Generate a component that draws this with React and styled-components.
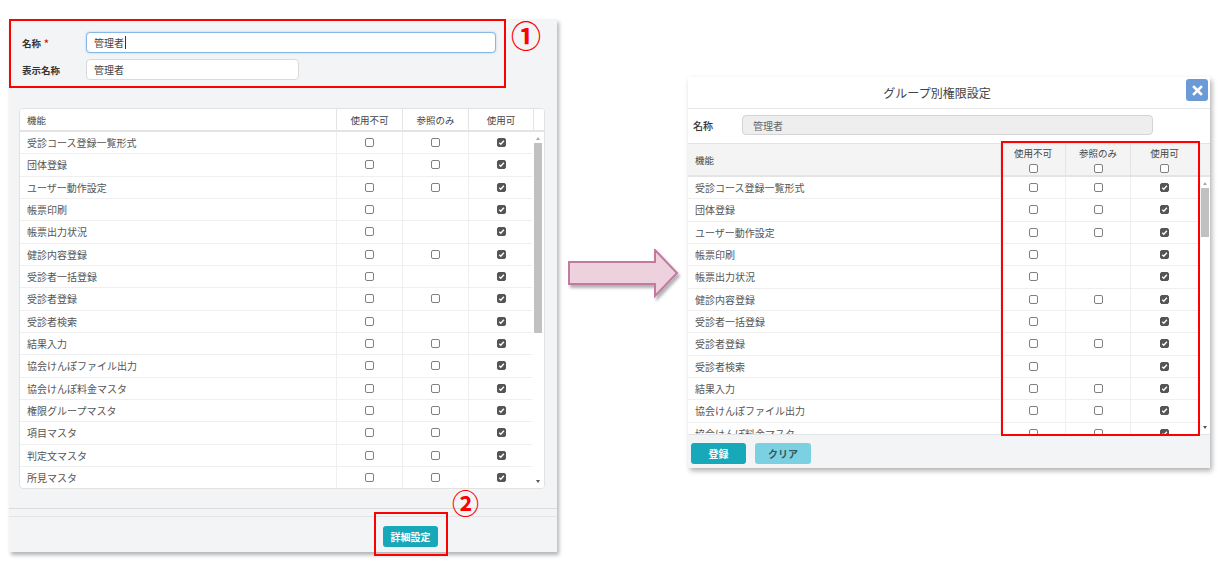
import React from 'react';
import styled, { createGlobalStyle } from 'styled-components';

const Global = createGlobalStyle`
  html, body { margin: 0; padding: 0; background: #fff; }
  body { font-family: "Noto Sans CJK JP", "Noto Sans", sans-serif; color: #555; }
  * { box-sizing: border-box; }
`;

const Page = styled.div`
  width: 1221px;
  height: 565px;
  overflow: hidden;
  display: flex;
  align-items: flex-start;
  padding-left: 9px;
`;

/* ---------- left panel ---------- */
const LeftPanel = styled.section`
  flex-shrink: 0;
  margin-top: 19px;
  width: 548px;
  height: 533px;
  background: #f3f4f6;
  box-shadow: 2px 3px 4px rgba(0, 0, 0, 0.3);
  display: flex;
  flex-direction: column;
`;

const FormRow = styled.div`
  display: flex;
  align-items: flex-start;
`;

const FormBox = styled.div`
  width: 497px;
  height: 69px;
  border: 2px solid #f00;
  padding: 11px 8px 0 11px;
  display: grid;
  grid-template-columns: 64px 1fr;
  row-gap: 6px;
  align-items: center;
  align-content: start;
`;

const Label = styled.div`
  font-size: 9.5px;
  font-weight: 700;
  color: #333;
`;

const Req = styled.span`
  color: #e02020;
  margin-left: 3px;
`;

const Field = styled.div`
  width: ${(p) => p.$w}px;
  height: 21px;
  border: 1px solid ${(p) => (p.$focus ? '#86b7e6' : '#d9d9d9')};
  box-shadow: ${(p) => (p.$focus ? '0 0 2px rgba(102,160,220,0.5)' : 'none')};
  border-radius: 4px;
  background: #fff;
  font-size: 10px;
  color: #444;
  padding-left: 7px;
  display: flex;
  align-items: center;
`;

const Caret = styled.span`
  display: inline-block;
  width: 1px;
  height: 13px;
  background: #333;
  margin-left: 1px;
`;

const Badge = styled.div`
  color: #f00;
  font-size: ${(p) => p.$size}px;
  font-weight: 700;
  line-height: 1;
  margin-left: 5px;
`;

const TableCard = styled.div`
  margin: 20px 12px 0 10px;
  height: 381px;
  background: #fff;
  border: 1px solid #e2e2e2;
  border-radius: 4px;
  overflow: hidden;
  display: flex;
  flex-direction: column;
`;

const HeadRow = styled.div`
  flex-shrink: 0;
  display: grid;
  grid-template-columns: ${(p) => p.$cols} 1fr;
  height: ${(p) => p.$h}px;
  background: ${(p) => p.$bg};
  border-bottom: 2px solid #e4e4e4;
`;

const HeadCell = styled.div`
  border-right: 1px solid #e4e4e4;
  display: flex;
  flex-direction: column;
  align-items: ${(p) => (p.$left ? 'flex-start' : 'center')};
  justify-content: center;
  gap: 5px;
  padding-left: ${(p) => (p.$left ? 7 : 0)}px;
  font-size: 9.5px;
  color: #444;
  line-height: 12px;
`;

const Body = styled.div`
  flex: 1;
  min-height: 0;
  display: flex;
`;

const RowList = styled.div`
  flex: 1;
  overflow: hidden;
`;

const Row = styled.div`
  display: grid;
  grid-template-columns: ${(p) => p.$cols};
  height: 22.33px;
  border-bottom: 1px solid #efefef;
`;

const Cell = styled.div`
  border-right: 1px solid #efefef;
  display: flex;
  align-items: center;
  justify-content: ${(p) => (p.$left ? 'flex-start' : 'center')};
  padding-left: ${(p) => (p.$left ? 7 : 0)}px;
  font-size: 10px;
  color: #555;
  white-space: nowrap;
`;

const Scroll = styled.div`
  width: ${(p) => p.$w}px;
  flex-shrink: 0;
  background: #fff;
  display: flex;
  flex-direction: column;
  align-items: center;
`;

const UpArrow = styled.div`
  width: 0;
  height: 0;
  border-left: 2.5px solid transparent;
  border-right: 2.5px solid transparent;
  border-bottom: 3px solid #aaa;
  margin: 5px 0 3px;
`;

const Thumb = styled.div`
  width: 8px;
  height: ${(p) => p.$h}px;
  background: #c1c1c1;
`;

const Grow = styled.div`
  flex: 1;
`;

const DownArrow = styled.div`
  width: 0;
  height: 0;
  border-left: 2.5px solid transparent;
  border-right: 2.5px solid transparent;
  border-top: 3px solid #555;
  margin-bottom: 5px;
`;

const Sep = styled.div`
  margin-top: 19px;
  height: 9px;
  border-top: 1px solid #dcdcdc;
  border-bottom: 1px solid #e4e4e4;
`;

const LeftFooter = styled.div`
  flex: 1;
  display: flex;
  align-items: flex-start;
  padding: 5px 0 0 374px;
`;

const Annot = styled.div`
  position: relative;
`;

const RedFrame = styled.div`
  position: absolute;
  pointer-events: none;
  border: 2px solid #f00;
  left: ${(p) => p.$l}px;
  top: ${(p) => p.$t}px;
  width: ${(p) => p.$w}px;
  height: ${(p) => p.$h}px;
`;

const FloatNum = styled.div`
  position: absolute;
  left: 69px;
  top: -33px;
  color: #f00;
  font-size: 27px;
  font-weight: 700;
  line-height: 1;
`;

const Btn = styled.button`
  width: ${(p) => p.$w}px;
  height: 21px;
  border: none;
  border-radius: 3px;
  padding: 0;
  background: ${(p) => (p.$light ? '#7bd0e1' : '#17a8b9')};
  color: ${(p) => (p.$light ? '#2f5a63' : '#fff')};
  font-family: inherit;
  font-size: 10px;
  font-weight: 700;
`;

/* ---------- arrow ---------- */
const ArrowCol = styled.div`
  flex-shrink: 0;
  width: 131px;
  padding: 249px 0 0 11px;
`;

/* ---------- dialog ---------- */
const Dialog = styled.section`
  flex-shrink: 0;
  position: relative;
  margin-top: 77px;
  width: 522px;
  height: 391px;
  background: #fff;
  box-shadow: 2px 3px 5px rgba(0, 0, 0, 0.3);
  display: flex;
  flex-direction: column;
`;

const TitleBar = styled.header`
  height: 32px;
  flex-shrink: 0;
  border-bottom: 1px solid #e6e6e6;
  display: flex;
  align-items: flex-start;
  padding: 2px 2px 0 0;
`;

const Title = styled.h2`
  flex: 1;
  margin: 0;
  font-size: 12px;
  font-weight: 400;
  color: #444;
  text-align: center;
  line-height: 28px;
`;

const CloseBtn = styled.button`
  width: 22px;
  height: 22px;
  border: none;
  border-radius: 3px;
  background: #6b9bd6;
  padding: 0;
  display: flex;
  align-items: center;
  justify-content: center;
`;

const NameRow = styled.div`
  height: 34px;
  flex-shrink: 0;
  display: grid;
  grid-template-columns: 49px 411px;
  align-items: center;
  align-content: start;
  padding: 6px 0 0 5px;
`;

const DLabel = styled.div`
  font-size: 10px;
  font-weight: 500;
  color: #333;
`;

const ReadOnly = styled.div`
  height: 20px;
  border: 1px solid #d4d4d4;
  border-radius: 4px;
  background: #eee;
  font-size: 10px;
  color: #666;
  padding-left: 10px;
  display: flex;
  align-items: center;
`;

const DTable = styled.div`
  flex: 1;
  min-height: 0;
  border-top: 1px solid #e3e3e3;
  display: flex;
  flex-direction: column;
`;

const DFooter = styled.div`
  height: 34px;
  flex-shrink: 0;
  background: #f3f4f6;
  border-top: 1px solid #e4e4e4;
  display: flex;
  align-items: flex-start;
  gap: 9px;
  padding: 8px 0 0 3px;
`;

/* ---------- checkbox ---------- */
const Box = styled.span`
  width: 9px;
  height: 9px;
  border: 1px solid ${(p) => (p.$on ? '#555' : '#808080')};
  border-radius: 2px;
  background: ${(p) => (p.$on ? '#555' : '#fff')};
  display: inline-flex;
  align-items: center;
  justify-content: center;
`;

const Check = ({ on }) => (
  <Box $on={on}>
    {on && (
      <svg width="7" height="7" viewBox="0 0 10 10">
        <path d="M1.8 5.2 L4 7.4 L8.4 2.6" fill="none" stroke="#fff" strokeWidth="2" />
      </svg>
    )}
  </Box>
);

const rows = [
  ['受診コース登録一覧形式', true],
  ['団体登録', true],
  ['ユーザー動作設定', true],
  ['帳票印刷', false],
  ['帳票出力状況', false],
  ['健診内容登録', true],
  ['受診者一括登録', false],
  ['受診者登録', true],
  ['受診者検索', false],
  ['結果入力', true],
  ['協会けんぽファイル出力', true],
  ['協会けんぽ料金マスタ', true],
  ['権限グループマスタ', true],
  ['項目マスタ', true],
  ['判定文マスタ', true],
  ['所見マスタ', true],
];

const PermRows = ({ cols, list }) =>
  list.map(([name, ref]) => (
    <Row key={name} $cols={cols}>
      <Cell $left>{name}</Cell>
      <Cell><Check /></Cell>
      <Cell>{ref && <Check />}</Cell>
      <Cell><Check on /></Cell>
    </Row>
  ));

const ScrollBar = ({ w, thumb }) => (
  <Scroll $w={w}>
    <UpArrow />
    <Thumb $h={thumb} />
    <Grow />
    <DownArrow />
  </Scroll>
);

const BigArrow = () => (
  <svg width="114" height="54" viewBox="0 0 114 54">
    <defs>
      <filter id="sh" x="-10%" y="-20%" width="130%" height="160%">
        <feDropShadow dx="2" dy="3" stdDeviation="1.5" floodColor="#000" floodOpacity="0.3" />
      </filter>
    </defs>
    <path
      d="M1 13 H87 V1 L109 24 L87 47 V35 H1 Z"
      fill="#edd1dd"
      stroke="#c27aa1"
      strokeWidth="2"
      strokeLinejoin="miter"
      filter="url(#sh)"
    />
  </svg>
);

const LCOLS = '317px 66px 66px 65px';
const RCOLS = '313px 65px 65px 68px';

export default function App() {
  return (
    <>
      <Global />
      <Page>
        <LeftPanel>
          <FormRow>
            <FormBox>
              <Label>
                名称<Req>*</Req>
              </Label>
              <Field $w={410} $focus>
                管理者
                <Caret />
              </Field>
              <Label>表示名称</Label>
              <Field $w={213}>管理者</Field>
            </FormBox>
            <Badge $size={30}>①</Badge>
          </FormRow>

          <TableCard>
            <HeadRow $cols={LCOLS} $h={23} $bg="#fff">
              <HeadCell $left>機能</HeadCell>
              <HeadCell>使用不可</HeadCell>
              <HeadCell>参照のみ</HeadCell>
              <HeadCell>使用可</HeadCell>
              <div />
            </HeadRow>
            <Body>
              <RowList>
                <PermRows cols={LCOLS} list={rows} />
              </RowList>
              <ScrollBar w={12} thumb={190} />
            </Body>
          </TableCard>

          <Sep />
          <LeftFooter>
            <Annot>
              <Btn $w={55}>詳細設定</Btn>
              <RedFrame $l={-9} $t={-10} $w={74} $h={44} />
              <FloatNum>②</FloatNum>
            </Annot>
          </LeftFooter>
        </LeftPanel>

        <ArrowCol>
          <BigArrow />
        </ArrowCol>

        <Dialog>
          <TitleBar>
            <Title>グループ別権限設定</Title>
            <CloseBtn aria-label="close">
              <svg width="11" height="11" viewBox="0 0 11 11">
                <path d="M2 2 L9 9 M9 2 L2 9" stroke="#fff" strokeWidth="2.6" strokeLinecap="square" />
              </svg>
            </CloseBtn>
          </TitleBar>
          <NameRow>
            <DLabel>名称</DLabel>
            <ReadOnly>管理者</ReadOnly>
          </NameRow>
          <DTable>
            <HeadRow $cols={RCOLS} $h={33} $bg="#f4f4f4">
              <HeadCell $left>機能</HeadCell>
              <HeadCell>
                使用不可
                <Check />
              </HeadCell>
              <HeadCell>
                参照のみ
                <Check />
              </HeadCell>
              <HeadCell>
                使用可
                <Check />
              </HeadCell>
              <div />
            </HeadRow>
            <Body>
              <RowList>
                <PermRows cols={RCOLS} list={rows.slice(0, 12)} />
              </RowList>
              <ScrollBar w={11} thumb={49} />
            </Body>
          </DTable>
          <DFooter>
            <Btn $w={55}>登録</Btn>
            <Btn $w={56} $light>クリア</Btn>
          </DFooter>
          <RedFrame $l={313} $t={64} $w={199} $h={295} />
        </Dialog>
      </Page>
    </>
  );
}
